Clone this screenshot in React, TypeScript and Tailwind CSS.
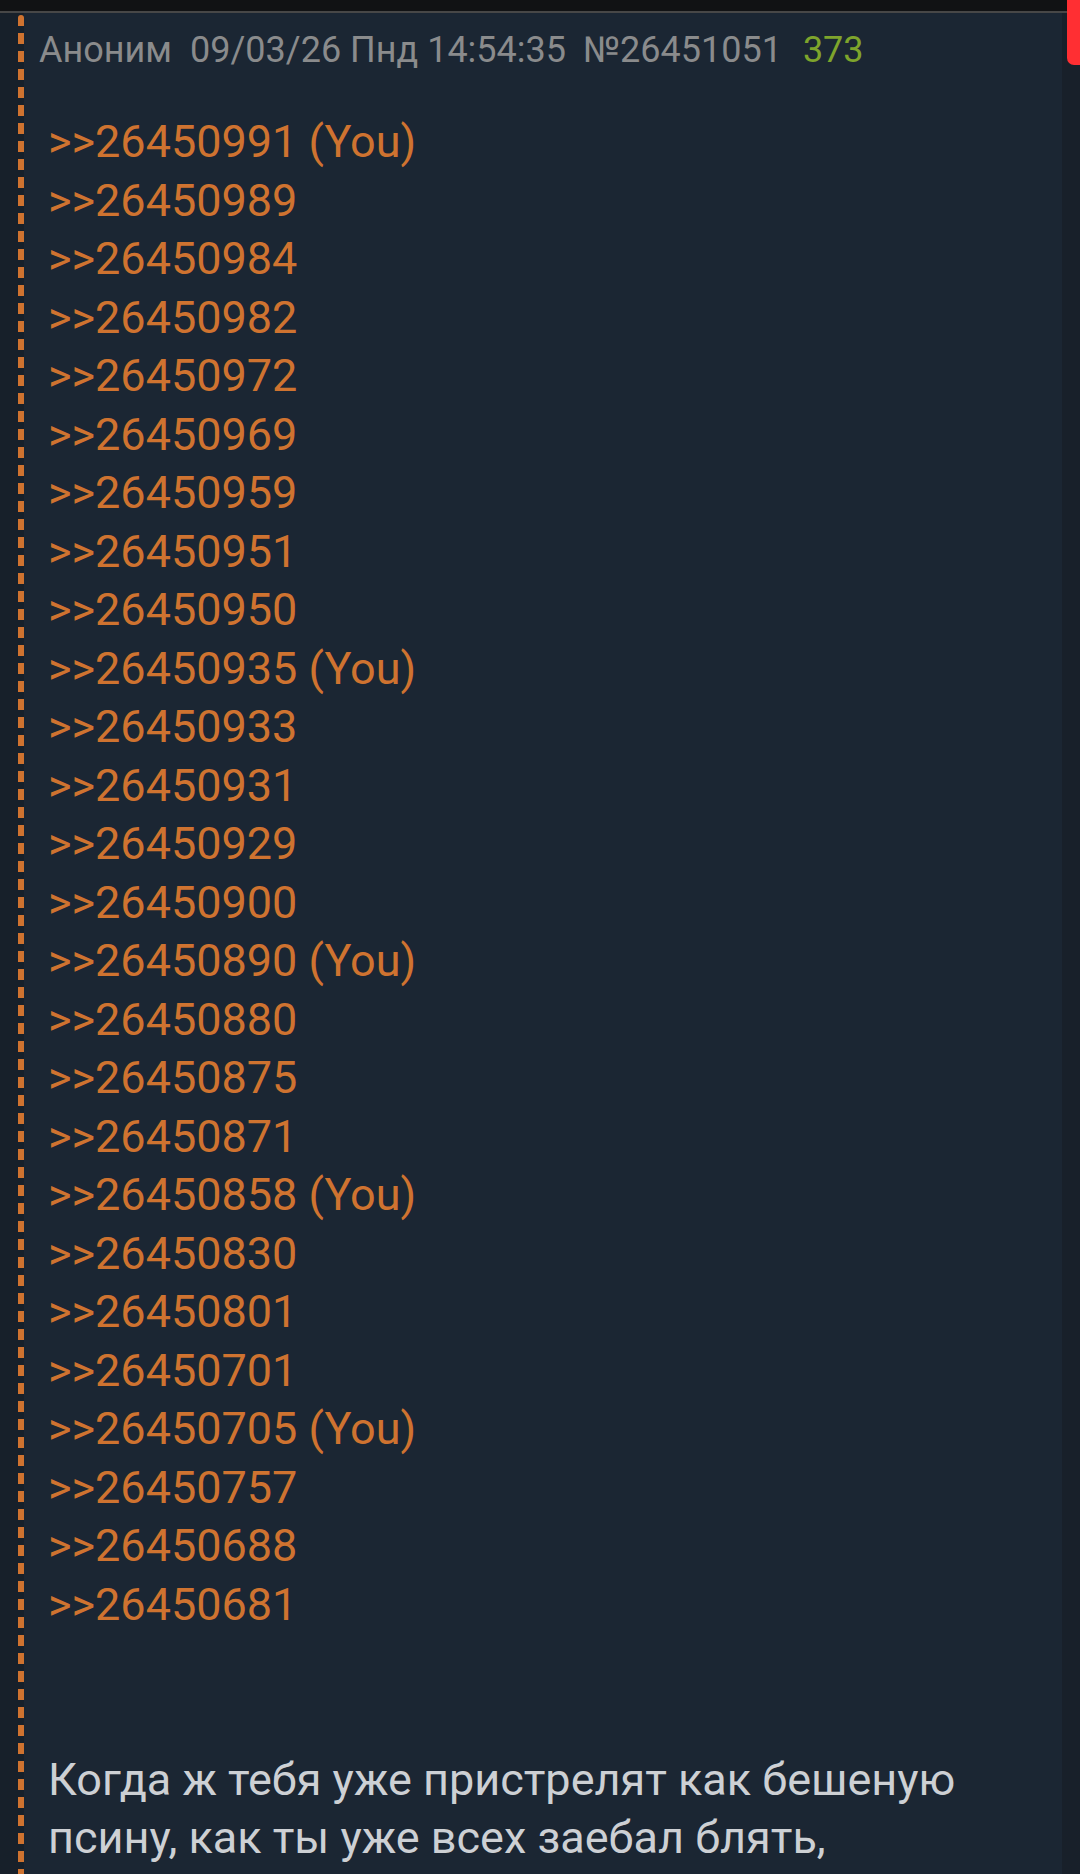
import React from 'react';

const replies: { id: string; you?: boolean }[] = [
  { id: '26450991', you: true },
  { id: '26450989' },
  { id: '26450984' },
  { id: '26450982' },
  { id: '26450972' },
  { id: '26450969' },
  { id: '26450959' },
  { id: '26450951' },
  { id: '26450950' },
  { id: '26450935', you: true },
  { id: '26450933' },
  { id: '26450931' },
  { id: '26450929' },
  { id: '26450900' },
  { id: '26450890', you: true },
  { id: '26450880' },
  { id: '26450875' },
  { id: '26450871' },
  { id: '26450858', you: true },
  { id: '26450830' },
  { id: '26450801' },
  { id: '26450701' },
  { id: '26450705', you: true },
  { id: '26450757' },
  { id: '26450688' },
  { id: '26450681' },
];

export default function App() {
  return (
    <div className="relative w-[1080px] h-[1874px] overflow-hidden bg-[#111214] font-['Roboto','Noto_Sans',sans-serif] flex flex-col">
      <div className="h-[11px] shrink-0" />
      <div className="h-[2px] shrink-0 bg-[#474747]" />

      <div className="flex flex-1 min-h-0">
        <div className="w-[18px] shrink-0 bg-[#17202a]" />
        <div className="w-[6px] shrink-0 bg-[#17202a] pt-[2px]">
          <div className="h-full rounded-t-[3px] bg-[repeating-linear-gradient(to_bottom,#cf7330_0px,#cf7330_11px,transparent_11px,transparent_18px)]" />
        </div>

        {/* пост */}
        <div className="flex-1 min-w-0 bg-[#1b2633] pr-4">
          <div className="pt-[16px] pl-[15px] text-[36px] leading-[42px] text-[#8a8b8c] whitespace-nowrap">
            <span>Аноним</span>
            <span className="ml-[18px]">09/03/26 Пнд 14:54:35</span>
            <span className="ml-[17px]">№26451051</span>
            <span className="ml-[21px] text-[#7ea42c]">373</span>
          </div>

          <div className="mt-[42px] pl-[24px] text-[45px] leading-[58.5px]">
            {replies.map((r) => (
              <div key={r.id} className="text-[#cf7330]">
                &gt;&gt;{r.id}
                {r.you && ' (You)'}
              </div>
            ))}
            <br />
            <br />
            <div className="text-[#cdd0d4] leading-[58px]">
              Когда ж тебя уже пристрелят как бешеную псину, как ты уже всех заебал блять,
            </div>
          </div>
        </div>

        <div className="w-[18px] shrink-0 bg-[#18202a]" />
      </div>

      {/* ползунок прокрутки */}
      <div className="absolute top-0 right-0 w-[13px] h-[65px] rounded-bl-[7px] bg-[#ff2f33]" />
    </div>
  );
}
